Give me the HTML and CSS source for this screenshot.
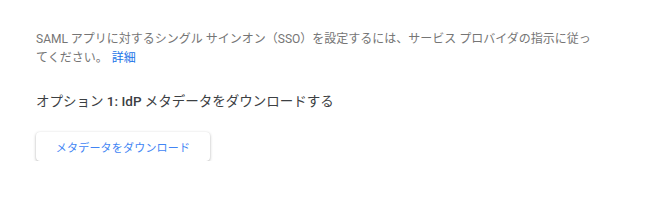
FILE: index.html
```html
<!DOCTYPE html>
<html lang="ja">
<head>
<meta charset="utf-8">
<link rel="stylesheet" href="styles.css">
</head>
<body>
<div class="page">
  <p class="desc">SAML アプリに対するシングル サインオン（SSO）を設定するには、サービス プロバイダの指示に従ってください。<a class="link" href="#">詳細</a></p>
  <h2 class="option">オプション <span class="num">1: IdP</span> メタデータをダウンロードする</h2>
  <button class="btn">メタデータをダウンロード</button>
</div>
</body>
</html>
```
FILE: styles.css
```css
html, body {
  margin: 0;
  padding: 0;
  background: #fff;
}
.page {
  padding: 30px 36px 0 36px;
  font-family: Roboto, "Noto Sans CJK JP", sans-serif;
}
.desc {
  margin: 0;
  width: 560px;
  font-size: 12px;
  line-height: 19px;
  color: #757575;
}
.link {
  margin-left: 4px;
  color: #1a73e8;
  text-decoration: none;
}
.option {
  margin: 23px 0 0 0;
  font-size: 13.5px;
  line-height: 20px;
  font-weight: 400;
  color: #3c4043;
}
.num {
  font-weight: 500;
}
.btn {
  margin-top: 21px;
  width: 174px;
  height: 29px;
  border: none;
  border-radius: 4px;
  background: #fff;
  box-shadow: 0 1px 3px rgba(0,0,0,0.3), 0 0 1px rgba(0,0,0,0.06);
  color: #4285f4;
  font-family: Roboto, "Noto Sans CJK JP", sans-serif;
  font-size: 11px;
  letter-spacing: 0.2px;
  padding: 0;
}
```
